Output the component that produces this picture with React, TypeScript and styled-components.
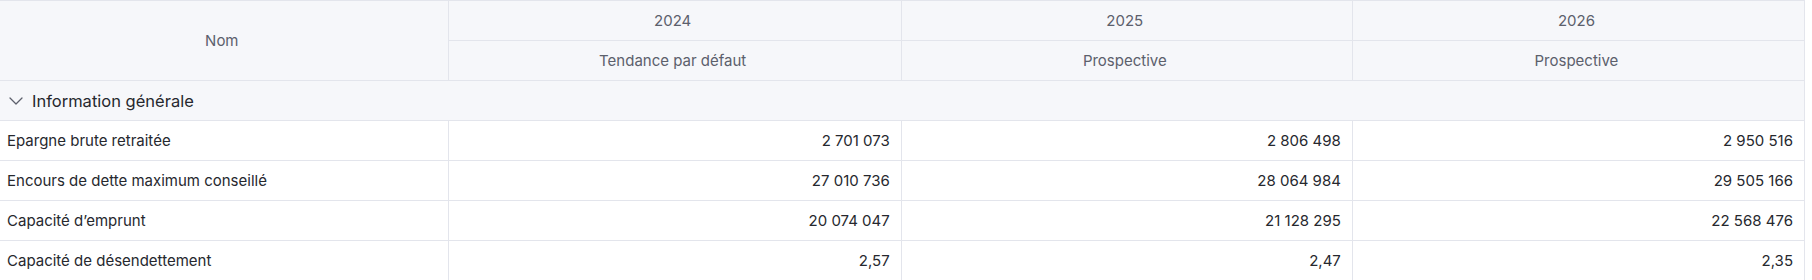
import styled, { createGlobalStyle } from "styled-components";
import { ChevronDown } from "lucide-react";
////////////////////////////////////////////////////////////////////////////////

const colors = {
  headerBg: "#f6f7fa",
  border: "#e3e5ec",
  headerText: "#5c606c",
  text: "#26282e",
  white: "#ffffff",
};

type Row = { name: string; values: string[] };

const years = [
  { year: "2024", kind: "Tendance par défaut" },
  { year: "2025", kind: "Prospective" },
  { year: "2026", kind: "Prospective" },
];

const rows: Row[] = [
  { name: "Epargne brute retraitée", values: ["2 701 073", "2 806 498", "2 950 516"] },
  { name: "Encours de dette maximum conseillé", values: ["27 010 736", "28 064 984", "29 505 166"] },
  { name: "Capacité d’emprunt", values: ["20 074 047", "21 128 295", "22 568 476"] },
  { name: "Capacité de désendettement", values: ["2,57", "2,47", "2,35"] },
];

export default function App() {
  return (
    <>
      <GlobalStyle />
      <Table>
        <colgroup>
          <col style={{ width: 448 }} />
          <col style={{ width: 453 }} />
          <col style={{ width: 451 }} />
          <col style={{ width: 452 }} />
        </colgroup>
        <thead>
          <tr>
            <HeadCell rowSpan={2}>Nom</HeadCell>
            {years.map((y, i) => (
              <HeadCell key={i}>{y.year}</HeadCell>
            ))}
          </tr>
          <tr>
            {years.map((y, i) => (
              <HeadCell key={i}>{y.kind}</HeadCell>
            ))}
          </tr>
        </thead>
        <tbody>
          <tr>
            <GroupCell colSpan={4}>
              <GroupLabel>
                <ChevronDown size={24} strokeWidth={1.25} />
                Information générale
              </GroupLabel>
            </GroupCell>
          </tr>
          {rows.map((r) => (
            <tr key={r.name}>
              <NameCell>{r.name}</NameCell>
              {r.values.map((v, i) => (
                <ValueCell key={i}>{v}</ValueCell>
              ))}
            </tr>
          ))}
        </tbody>
      </Table>
    </>
  );
}

const GlobalStyle = createGlobalStyle`
  body {
    margin: 0;
    background: ${colors.white};
    font-family: Inter, "Noto Sans", sans-serif;
  }
`;

const Table = styled.table`
  width: 1805px;
  table-layout: fixed;
  border-collapse: collapse;
  font-size: 15px;
  color: ${colors.text};
`;

const Cell = styled.td`
  height: 40px;
  padding: 0 11px 0 7px;
  border: 1px solid ${colors.border};
  box-sizing: border-box;
  white-space: nowrap;
  overflow: hidden;
  &:first-child {
    border-left: none;
  }
`;

const HeadCell = styled(Cell).attrs({ as: "th" })`
  background: ${colors.headerBg};
  color: ${colors.headerText};
  font-weight: 400;
  text-align: center;
`;

const GroupCell = styled(Cell)`
  background: ${colors.headerBg};
  padding-left: 4px;
`;

const GroupLabel = styled.div`
  display: flex;
  align-items: center;
  gap: 4px;
  font-size: 16.5px;
  font-weight: 400;
  color: ${colors.text};
  svg {
    color: ${colors.headerText};
  }
`;

const NameCell = styled(Cell)`
  text-align: left;
`;

const ValueCell = styled(Cell)`
  text-align: right;
`;
